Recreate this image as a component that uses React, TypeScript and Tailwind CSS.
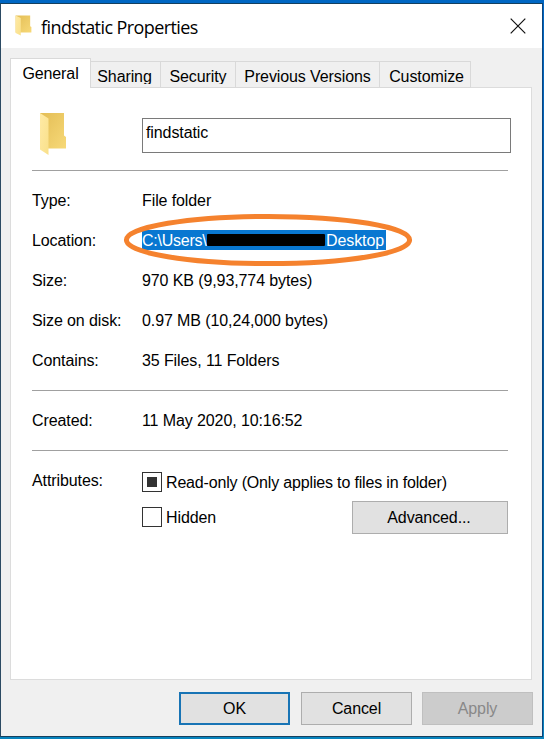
import React from "react";

const ui = "font-['Liberation_Sans',Arial,sans-serif]";

function Folder({ className }: { className: string }) {
  return (
    <svg className={className} viewBox="0 0 28 44" preserveAspectRatio="none">
      <defs>
        <linearGradient id="back" x1="0" y1="0" x2="1" y2="1">
          <stop offset="0" stopColor="#e3bd55" />
          <stop offset="1" stopColor="#f7d978" />
        </linearGradient>
        <linearGradient id="front" x1="0" y1="0" x2="1" y2="1">
          <stop offset="0" stopColor="#ffeaa5" />
          <stop offset="1" stopColor="#f9e08a" />
        </linearGradient>
      </defs>
      <path d="M1 1H25V23.5L27 25V36.5H1Z" fill="url(#back)" />
      <path d="M1 1L9.5 6.5V43L1 37.5Z" fill="url(#front)" />
    </svg>
  );
}

function Tab({ className, children }: { className: string; children: React.ReactNode }) {
  return (
    <div className={`flex h-[27px] items-center justify-center border-t border-r border-b border-[#d9d9d9] pt-[2px] ${className}`}>
      <span className="h-[17px] overflow-hidden leading-[19px]">{children}</span>
    </div>
  );
}

function Row({ label, children }: { label: string; children: React.ReactNode }) {
  return (
    <div className="flex h-10 items-center">
      <div className="w-[110px] shrink-0">{label}</div>
      <div className="whitespace-nowrap">{children}</div>
    </div>
  );
}

function Rule() {
  return <div className="h-px w-[476px] bg-[#a0a0a0]" />;
}

export default function App() {
  return (
    <div className={`flex h-[739px] w-[544px] overflow-hidden bg-gradient-to-b from-[#0067c4] via-[#075b9c] to-[#0883bd] pt-[3px] pr-px pb-[2px] text-[16px] leading-5 tracking-[-0.1px] text-black ${ui}`}>
      <div className="flex w-[543px] flex-col border border-[#15405f] border-r-[#0a4580] border-l-[#2b4a63] bg-[#f0f0f0]">
        <div className="flex h-11 shrink-0 items-center bg-white pr-[16px] pl-[14px]">
          <Folder className="mb-[1px] h-[21px] w-[17px]" />
          <span className="mt-[1px] ml-[9px] font-['Open_Sans','Segoe_UI',sans-serif] text-[18px] tracking-[-0.58px]">findstatic Properties</span>
          <svg className="ml-auto h-4 w-4" viewBox="0 0 16 16">
            <path d="M.7 .7L15.3 15.3M15.3 .7L.7 15.3" stroke="#111" strokeWidth="1.2" fill="none" />
          </svg>
        </div>

        <div className="relative z-10 ml-[9px] flex h-[40px] shrink-0 items-end whitespace-nowrap">
          <div className="flex h-[30px] w-[81px] items-center justify-center border border-b-0 border-[#d9d9d9] bg-white">General</div>
          <Tab className="w-[70px] pr-[2px]">Sharing</Tab>
          <Tab className="w-[75px]">Security</Tab>
          <Tab className="w-[144px]">Previous Versions</Tab>
          <Tab className="w-[91px] pl-[3px]">Customize</Tab>
        </div>

        <div className="-mt-px ml-[9px] h-[593px] w-[522px] shrink-0 border border-[#dcdcdc] bg-white pl-[21px]">
          <div className="flex h-[82px] items-start">
            <Folder className="mt-[24px] ml-[7px] h-[44px] w-[28px]" />
            <div className="mt-[30px] ml-[75px] h-[35px] w-[369px] border border-[#7a7a7a] pt-[4px] pl-[3px]">findstatic</div>
          </div>
          <Rule />
          <div className="h-[219px] pt-[10px]">
            <Row label="Type:">File folder</Row>
            <Row label="Location:">
              <div className="relative mb-[2px] flex h-5 w-[244px] items-center bg-[#0877d1] text-white">
                <span className="mt-[2px] w-[65px] tracking-[-0.25px]">C:\Users\</span>
                <span className="h-3 w-[118px] rounded-[1px] bg-black" />
                <span className="mt-[2px] ml-px">Desktop</span>
                <svg className="absolute top-[-17px] left-[-19px] h-[54px] w-[290px]" viewBox="0 0 290 54">
                  <ellipse cx="145" cy="27" rx="141.6" ry="23.6" fill="none" stroke="#f5822e" strokeWidth="5" />
                </svg>
              </div>
            </Row>
            <Row label="Size:">970 KB (9,93,774 bytes)</Row>
            <Row label="Size on disk:">0.97 MB (10,24,000 bytes)</Row>
            <Row label="Contains:">35 Files, 11 Folders</Row>
          </div>
          <Rule />
          <div className="h-[59px] pt-[10px]">
            <Row label="Created:">11 May 2020, 10:16:52</Row>
          </div>
          <Rule />
          <div className="flex pt-[20px]">
            <div className="w-[110px] shrink-0">Attributes:</div>
            <div className="w-[366px]">
              <div className="mt-px flex h-5 items-center">
                <div className="flex h-5 w-5 items-center justify-center border border-[#333]"><div className="h-[10px] w-[10px] bg-[#333]" /></div>
                <span className="mt-px ml-1 whitespace-nowrap tracking-[-0.17px]">Read-only (Only applies to files in folder)</span>
              </div>
              <div className="mt-[9px] flex h-[33px] items-center">
                <div className="mb-px h-5 w-5 border border-[#333]" />
                <span className="ml-1">Hidden</span>
                <button className="ml-auto h-[33px] w-[156px] border border-[#adadad] bg-[#e1e1e1] pr-[2px]">Advanced...</button>
              </div>
            </div>
          </div>
        </div>

        <div className="mt-3 flex shrink-0 gap-[11px] pl-[178px]">
          <button className="h-[33px] w-[111px] border-2 border-[#1874b5] bg-[#e1e1e1]">OK</button>
          <button className="h-[33px] w-[111px] border border-[#adadad] bg-[#e1e1e1]">Cancel</button>
          <button className="-ml-px h-[33px] w-[111px] border border-[#bfbfbf] bg-[#cccccc] text-[#888]">Apply</button>
        </div>
      </div>
    </div>
  );
}
